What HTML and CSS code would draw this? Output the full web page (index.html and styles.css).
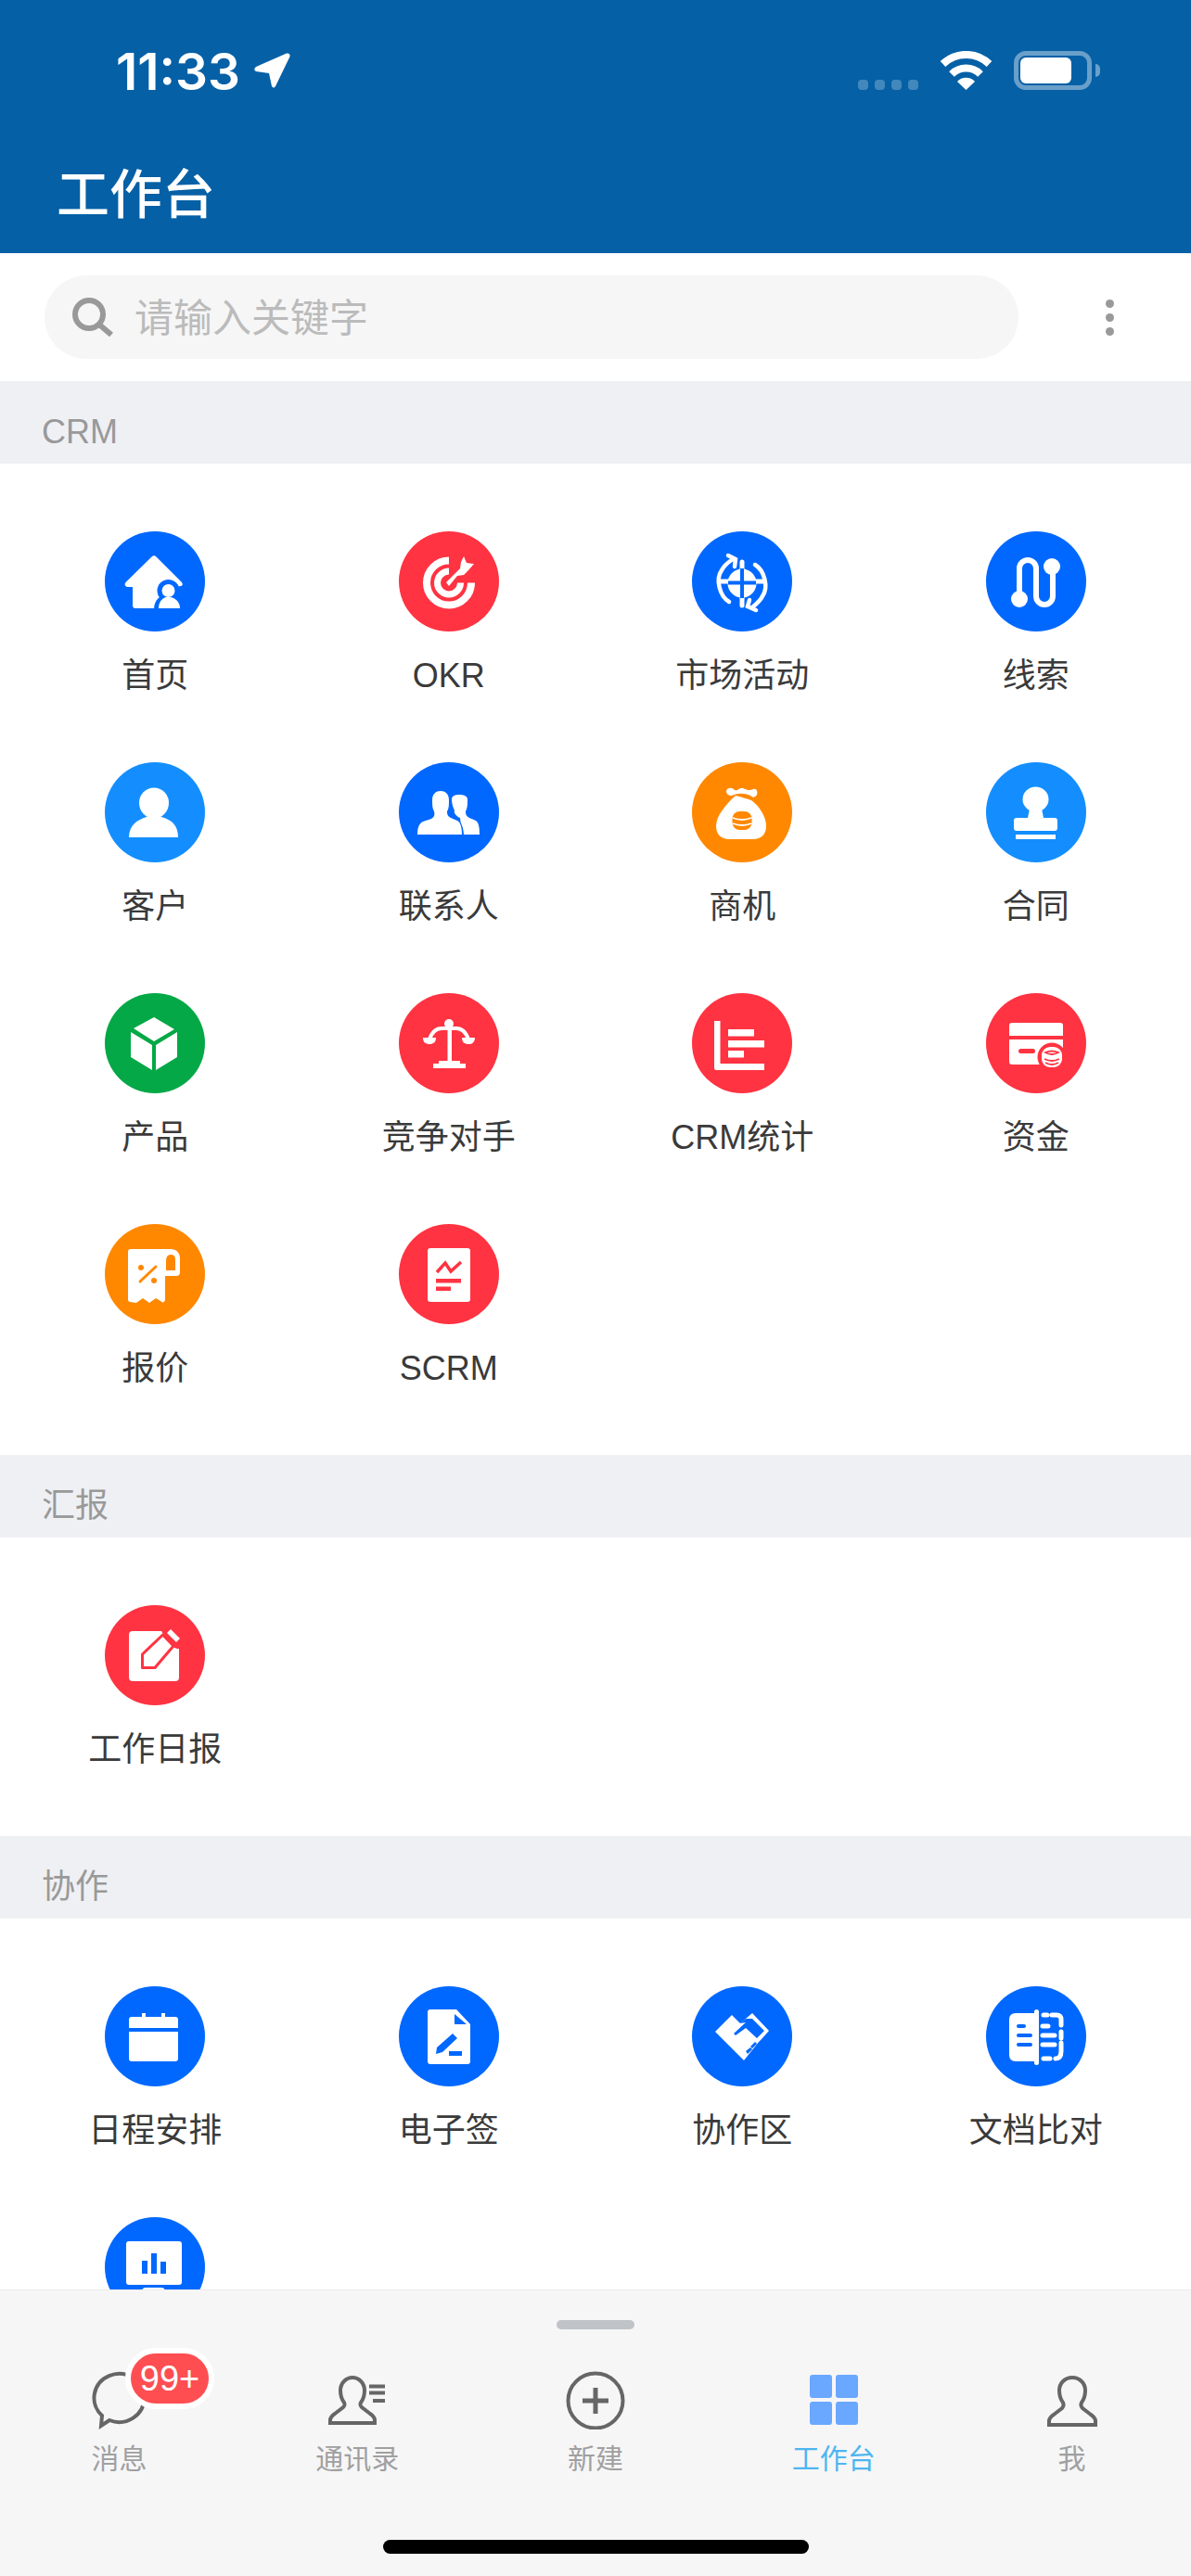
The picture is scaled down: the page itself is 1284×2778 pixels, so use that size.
FILE: index.html
```html
<!DOCTYPE html>
<html lang="zh-CN">
<head>
<meta charset="utf-8">
<title>工作台</title>
<link rel="stylesheet" href="styles.css">
</head>
<body>
<div class="page">
  <header class="header">
    <div class="status">
      <span class="time">11:33</span>
      <svg class="arrow" viewBox="0 0 40 40"><path d="M36 1.5 3 16Q-.5 19 3 21L17 23 20 37Q22 40 24 37L39.5 5Q40 1 36 1.5Z"/></svg>
      <div class="status-right">
        <div class="signal"><i></i><i></i><i></i><i></i></div>
        <svg class="wifi" viewBox="0 0 57 42"><path class="wifi-arc" d="M3.5 14A36 36 0 0 1 53.5 14"/><path class="wifi-arc" d="M13 25A22 22 0 0 1 44 25"/><path class="wifi-fan" d="M28.5 42 19 33A13 13 0 0 1 38 33Z"/></svg>
        <div class="battery"><div class="battery-level"></div></div>
        <div class="battery-cap"></div>
      </div>
    </div>
    <h1 class="title">工作台</h1>
  </header>

  <main class="content">
    <div class="search-row">
      <div class="search">
        <svg class="search-icon" viewBox="0 0 45 42"><circle cx="18" cy="18" r="15"/><path d="M29 29 42 40"/></svg>
        <span class="placeholder">请输入关键字</span>
      </div>
      <div class="more"><i></i><i></i><i></i></div>
    </div>

    <div class="section-head">CRM</div>
    <section class="grid">
      <div class="item">
        <div class="badge-icon blue"><svg viewBox="0 0 108 108"><path d="M50.500 27.500Q53 25 55.500 27.500L83 55Q85 58 82 59L76 60V83H33Q30 83 30 80V60H24Q20 58 22.500 55Z"/><circle class="cut" cx="68.500" cy="64" r="12"/><path class="cut" d="M53 84C53 74 60 68 68 68S84 74 84 84Z"/><circle cx="68.500" cy="64" r="7"/><path d="M58 83C58 76 62 72 66 71H71C76 72 81 76 81 83Z"/></svg></div>
        <div class="label">首页</div>
      </div>
      <div class="item">
        <div class="badge-icon red"><svg viewBox="0 0 108 108"><path class="line" stroke-width="8" d="M54 31.500A24 24 0 1 0 78 55.500"/><path class="line" stroke-width="7" d="M54 43A12.500 12.500 0 1 0 66.500 55.500"/><path class="cut-line" stroke-width="8" d="M53 57 74 35"/><path d="M51 55 66 40 67 33 70 27 73 34 81 35 75 42 70 47 63 48 54 59Z"/></svg></div>
        <div class="label">OKR</div>
      </div>
      <div class="item">
        <div class="badge-icon blue"><svg viewBox="0 0 108 108"><circle cx="54" cy="56" r="15.500"/><path class="line" stroke-width="5" stroke-linecap="round" d="M54 33V80M31 54H77"/><path class="cut-line" stroke-width="4" d="M54 40V72M39 55.500H69"/><path class="line" stroke-width="4.500" stroke-linecap="round" d="M40 76C30 70 25 52 32 42 34 38 38 34 44 30M39 26 47 30 46 38M68 36C78 42 83 60 76 70 74 74 70 78 65 82M69 85 60 81 62 74"/></svg></div>
        <div class="label">市场活动</div>
      </div>
      <div class="item">
        <div class="badge-icon blue"><svg viewBox="0 0 108 108"><path class="line" stroke-width="6" d="M36 73V40A9 9 0 0 1 54 40V70A9 9 0 0 0 72 70V38"/><circle cx="36" cy="73" r="9"/><circle cx="71" cy="38" r="9"/></svg></div>
        <div class="label">线索</div>
      </div>

      <div class="item">
        <div class="badge-icon sky"><svg viewBox="0 0 108 108"><ellipse cx="53" cy="44" rx="16" ry="16.500"/><path d="M26 81C26 68 35 62 45 59H61C72 62 79 68 79 81Z"/></svg></div>
        <div class="label">客户</div>
      </div>
      <div class="item">
        <div class="badge-icon blue"><svg viewBox="0 0 108 108"><path d="M57 40C57 36 61 35 65 35S74 36 74 40C74 46 74 49 72 53 72 57 73 58 76 60L83 63C86 65 87 70 87 78H68L66 60C62 58 59 55 60 52 58 48 57 44 57 40Z"/><path class="cut-line" stroke-width="2" d="M56 52 58 57C60 60 68 62 69 78"/><path d="M36 41C36 34 40 31 45 31S54 34 54 41C54 46 54 50 52 53 52 57 53 58 56 60L63 63C67 65 68 72 68 78H20C20 70 22 66 26 64L35 61C38 59 39 57 38 53 36 50 36 46 36 41Z"/></svg></div>
        <div class="label">联系人</div>
      </div>
      <div class="item">
        <div class="badge-icon orange"><svg viewBox="0 0 108 108"><path d="M37 31C38 27 43 27 46 30 49 32 51 27 55 28 59 30 63 31 66 29 70 28 71 32 70 35 68 38 66 39 63 36 56 33 50 33 43 36 39 36 37 34 37 31Z"/><path d="M47 36C52 37 58 39 64 41 72 47 80 58 80 69 80 78 74 83 66 83H40C32 83 26 78 26 69 26 58 36 46 47 36Z"/><rect class="cut" x="43.500" y="53" width="21" height="20" rx="8"/><path class="white-line" stroke-width="1.800" d="M44 60Q54 64 64 60M44 66Q54 70 64 66"/></svg></div>
        <div class="label">商机</div>
      </div>
      <div class="item">
        <div class="badge-icon sky"><svg viewBox="0 0 108 108"><ellipse cx="53.500" cy="40" rx="14" ry="13.500"/><path d="M47 50H60L62 60H74Q77 60 77 63V71Q77 74 74 74H33Q30 74 30 71V63Q30 60 33 60H45Z"/><rect x="32" y="78" width="43" height="5"/></svg></div>
        <div class="label">合同</div>
      </div>

      <div class="item">
        <div class="badge-icon green"><svg viewBox="0 0 108 108"><path d="M53 26 75 39 53 52 31 38ZM28 42 51 56V83L28 69ZM78 42 55 56V83L78 69Z"/></svg></div>
        <div class="label">产品</div>
      </div>
      <div class="item">
        <div class="badge-icon red"><svg viewBox="0 0 108 108"><circle cx="54" cy="33" r="5"/><path d="M52.500 38H57V73H66V76H72V81H37V76H43V73H52.500Z"/><path class="line" stroke-width="4" d="M33 50C36 41 41 38 46 38H62C67 38 72 41 75 50"/><path d="M26 48H40C40 53 37 55 33 55S26 53 26 48ZM68 48H82C82 53 79 55 75 55S68 53 68 48Z"/></svg></div>
        <div class="label">竞争对手</div>
      </div>
      <div class="item">
        <div class="badge-icon red"><svg viewBox="0 0 108 108"><path d="M24 30H30.500V76H78V83H26Q24 83 24 81Z"/><rect x="39" y="39" width="28" height="7.500"/><rect x="39" y="51" width="39" height="7.500"/><rect x="39" y="62" width="17" height="7.500"/></svg></div>
        <div class="label">CRM统计</div>
      </div>
      <div class="item">
        <div class="badge-icon red"><svg viewBox="0 0 108 108"><path d="M28 32H80Q83 32 83 35V46H25V35Q25 32 28 32ZM25 50H83V77H28Q25 77 25 74Z"/><rect class="cut" x="35" y="60" width="18" height="5" rx="2.500"/><circle class="cut" cx="71" cy="69" r="15.500"/><rect x="60" y="58" width="22" height="22" rx="9"/><path class="cut-line" stroke-width="1.800" d="M64 64Q71 61 78 64 71 68 64 64ZM63 71Q71 75 79 71M64 75Q71 79 78 75"/></svg></div>
        <div class="label">资金</div>
      </div>

      <div class="item">
        <div class="badge-icon orange"><svg viewBox="0 0 108 108"><path d="M28 27H71C77 27 81 31 81 37V52Q81 56 77 56H65V82C64 85 62 85 60 83L55 80 48 85 41 80 34 85 27 84Q25 84 25 81V30Q25 27 28 27Z"/><path class="cut" d="M66 40Q66 33 71 33 76 33 76 38V50H66Z"/><circle class="cut" cx="39" cy="47" r="3"/><circle class="cut" cx="53" cy="61" r="3"/><path class="cut-line" stroke-width="3" stroke-linecap="round" d="M38 62 55 46"/></svg></div>
        <div class="label">报价</div>
      </div>
      <div class="item">
        <div class="badge-icon red"><svg viewBox="0 0 108 108"><rect x="31" y="26" width="46" height="58" rx="3"/><path class="cut-line" stroke-width="3.500" d="M41 52 50 42 56 51 67 41"/><rect class="cut" x="40" y="59" width="27" height="4.500"/><rect class="cut" x="40" y="67.500" width="16" height="4.500"/></svg></div>
        <div class="label">SCRM</div>
      </div>
    </section>

    <div class="section-head">汇报</div>
    <section class="grid">
      <div class="item">
        <div class="badge-icon red"><svg viewBox="0 0 108 108"><rect x="26" y="28" width="54" height="54" rx="4"/><path class="cut" d="M60 26H82V47H78L70 44Z"/><path class="pen" d="M40.500 67.500V53L62.500 32 74 44 54 67.500Z"/><path d="M71 26 81 36 77 40 67 30Z"/></svg></div>
        <div class="label">工作日报</div>
      </div>
    </section>

    <div class="section-head">协作</div>
    <section class="grid">
      <div class="item">
        <div class="badge-icon blue"><svg viewBox="0 0 108 108"><path d="M40 29H44V33H61V29H65V33H76Q79 33 79 36V45H26V36Q26 33 29 33H40ZM26 49H79V78Q79 81 76 81H29Q26 81 26 78Z"/></svg></div>
        <div class="label">日程安排</div>
      </div>
      <div class="item">
        <div class="badge-icon blue"><svg viewBox="0 0 108 108"><path d="M34 25H62L77 41V81Q77 84 74 84H34Q31 84 31 81V28Q31 25 34 25Z"/><path class="cut" d="M60 30 73 41H60ZM58 51 63 56 47 71 40 73 41 66ZM54 70H68V75H54Z"/></svg></div>
        <div class="label">电子签</div>
      </div>
      <div class="item">
        <div class="badge-icon blue"><svg viewBox="0 0 108 108"><path d="M25 49 43 31 52 40 65 29 83 48 75 57 72 60 56 80Z"/><path class="cut" d="M65 35 78 48 70 56 58 45 47 53 45 51 58 39 52 40 58 35ZM58 70 63 66 65 68 60 73ZM63 65 68 60 70 62 65 67Z"/></svg></div>
        <div class="label">协作区</div>
      </div>
      <div class="item">
        <div class="badge-icon blue"><svg viewBox="0 0 108 108"><path d="M32 29H52V81H32Q25 81 25 74V36Q25 29 32 29Z"/><rect x="52" y="25" width="5" height="60" rx="2.500"/><path class="cut-line" stroke-width="4" stroke-linecap="round" d="M35 43H41M35 53H48M35 63H48"/><path class="white-line" stroke-width="5" stroke-linecap="round" d="M62 31H66M71 31H76Q81 31 81 36V42M81 49V56M81 61V70Q81 78 75 78M62 78H69M61 43H67M61 53H74M61 63H74"/></svg></div>
        <div class="label">文档比对</div>
      </div>
      <div class="item">
        <div class="badge-icon blue"><svg viewBox="0 0 108 108"><rect x="23" y="26" width="60" height="47" rx="3"/><rect class="cut" x="40" y="47" width="6" height="14"/><rect class="cut" x="50" y="39" width="6" height="22"/><rect class="cut" x="60" y="48" width="6" height="13"/><rect x="40" y="76" width="25" height="12" rx="4"/></svg></div>
      </div>
    </section>
  </main>

  <nav class="tabbar">
    <div class="handle"></div>
    <div class="tabs">
      <div class="tab">
        <svg class="tab-icon" viewBox="0 0 64 64"><path d="M14 49A27 26 0 1 1 22 54L13 60Z"/></svg>
        <div class="tab-label">消息</div>
        <div class="count">99+</div>
      </div>
      <div class="tab">
        <svg class="tab-icon" viewBox="0 0 64 64"><path transform="translate(0 6)" d="M3 51V48C3 45 5 43 8 41L17 34C19 32 19 31 18 29 15 25 14 20 14 16 14 8 20 2 27 2S40 8 40 16C40 20 39 25 36 29 35 31 35 32 37 34L46 41C49 43 51 45 51 48V51Z"/><path class="tab-lines" d="M45 17.500H62M45 24.500H62M49 33H62"/></svg>
        <div class="tab-label">通讯录</div>
      </div>
      <div class="tab">
        <svg class="tab-icon" viewBox="0 0 64 64"><circle cx="32" cy="33" r="29.500"/><path class="tab-plus" d="M32 19V47M18 33H46"/></svg>
        <div class="tab-label">新建</div>
      </div>
      <div class="tab tab-active">
        <div class="tab-grid"><i></i><i></i><i></i><i></i></div>
        <div class="tab-label">工作台</div>
      </div>
      <div class="tab">
        <svg class="tab-icon" viewBox="0 0 64 64"><path transform="translate(4 6)" d="M3 53V49C3 46 5 44 8 42L17 35C19 33 19 31 18 29 15 25 14 20 14 16 14 8 20 2 28 2S42 8 42 16C42 20 41 25 38 29 37 31 37 33 39 35L48 42C51 44 53 46 53 49V53Z"/></svg>
        <div class="tab-label">我</div>
      </div>
    </div>
    <div class="home-bar"></div>
  </nav>
</div>
</body>
</html>
```

FILE: styles.css
```css
* { box-sizing: border-box; }
html, body { margin: 0; padding: 0; }
body {
  width: 1284px;
  height: 2778px;
  overflow: hidden;
  background: #fff;
  font-family: "Liberation Sans", "Noto Sans CJK SC", sans-serif;
}
.page { display: flex; flex-direction: column; height: 2778px; }

/* header */
.header { height: 273px; flex: none; background: #0560a6; color: #fff; padding-top: 54px; }
.status { display: flex; align-items: center; height: 43px; padding: 0 98px 0 125px; }
.time { font-family: Inter, sans-serif; font-weight: 600; font-size: 55px; line-height: 43px; padding-top: 3px; }
.arrow { width: 40px; height: 40px; margin-left: 14px; fill: #fff; }
.status-right { margin-left: auto; display: flex; align-items: center; height: 42px; }
.signal { display: flex; gap: 7px; align-self: flex-end; margin-right: 23px; }
.signal i { width: 11px; height: 11px; border-radius: 4px; background: rgba(255, 255, 255, .25); }
.wifi { width: 57px; height: 42px; margin-right: 23px; }
.wifi-arc { fill: none; stroke: #fff; stroke-width: 8; }
.wifi-fan { fill: #fff; }
.battery { width: 84px; height: 42px; border: 5px solid rgba(255, 255, 255, .4); border-radius: 13px; padding: 2px; }
.battery-level { width: 55px; height: 100%; background: #fff; border-radius: 6px; }
.battery-cap { width: 5px; height: 14px; margin-left: 4px; background: rgba(255, 255, 255, .4); border-radius: 0 7px 7px 0; }
.title { margin: 81px 0 0 61px; font-size: 57px; line-height: 64px; font-weight: 500; }

/* content */
.content { flex: 1; min-height: 0; overflow: hidden; background: #fff; }
.search-row { height: 138px; display: flex; align-items: center; padding-left: 48px; }
.search { width: 1050px; height: 90px; border-radius: 45px; background: #f6f6f6; display: flex; align-items: center; padding-left: 30px; gap: 22px; }
.search-icon { width: 45px; height: 42px; flex: none; fill: none; stroke: #999; stroke-width: 6; }
.placeholder { font-size: 42px; color: #bbb; line-height: 50px; padding-top: 3px; }
.more { margin-left: 94px; display: flex; flex-direction: column; gap: 6px; }
.more i { width: 9px; height: 9px; border-radius: 50%; background: #999; }

.section-head { height: 89px; background: #eff0f4; color: #999; font-size: 36px; line-height: 40px; padding: 35px 0 0 45px; }
.grid { display: grid; grid-template-columns: repeat(4, 1fr); grid-auto-rows: 249px; padding: 73px 9px 0; }
.item { display: flex; flex-direction: column; align-items: center; }
.badge-icon { width: 108px; height: 108px; border-radius: 50%; background: currentColor; flex: none; }
.badge-icon svg { display: block; width: 108px; height: 108px; fill: #fff; }
.blue { color: #0068ff; }
.red { color: #ff3341; }
.sky { color: #148eff; }
.orange { color: #ff8800; }
.green { color: #04a846; }
.cut { fill: currentColor; }
.line { fill: none; stroke: #fff; }
.white-line { fill: none; stroke: #fff; }
.cut-line { fill: none; stroke: currentColor; }
.pen { stroke: currentColor; stroke-width: 3; stroke-linejoin: round; }
.label { margin-top: 26px; font-size: 36px; line-height: 44px; color: #3a3a3a; white-space: nowrap; }

/* tab bar */
.tabbar { height: 309px; flex: none; background: #f6f6f7; border-top: 1px solid #ebebeb; padding-top: 32px; }
.handle { width: 84px; height: 10px; margin: 0 auto; border-radius: 5px; background: #c0c3c8; }
.tabs { display: grid; grid-template-columns: repeat(5, 1fr); margin-top: 44px; }
.tab { position: relative; display: flex; flex-direction: column; align-items: center; }
.tab-icon { width: 64px; height: 64px; fill: none; stroke: #666; stroke-width: 4; }
.tab-lines { stroke-width: 4; }
.tab-plus { stroke-width: 5; }
.tab-label { margin-top: 14px; font-size: 30px; line-height: 36px; color: #a0a0a0; }
.tab-active .tab-label { color: #4db5f0; }
.tab-grid { width: 64px; height: 64px; display: grid; grid-template-columns: 24px 24px; grid-template-rows: 25px 25px; gap: 4px; justify-content: center; align-content: center; }
.tab-grid i { background: #6aa7ff; border-radius: 3px; }
.count { position: absolute; left: 135px; top: -24px; width: 96px; height: 66px; border: 6px solid #fff; border-radius: 33px; background: #fe4e52; color: #fff; font-size: 38px; line-height: 54px; text-align: center; }
.home-bar { width: 459px; height: 15px; margin: 69px auto 0; background: #000; border-radius: 8px; }
```
